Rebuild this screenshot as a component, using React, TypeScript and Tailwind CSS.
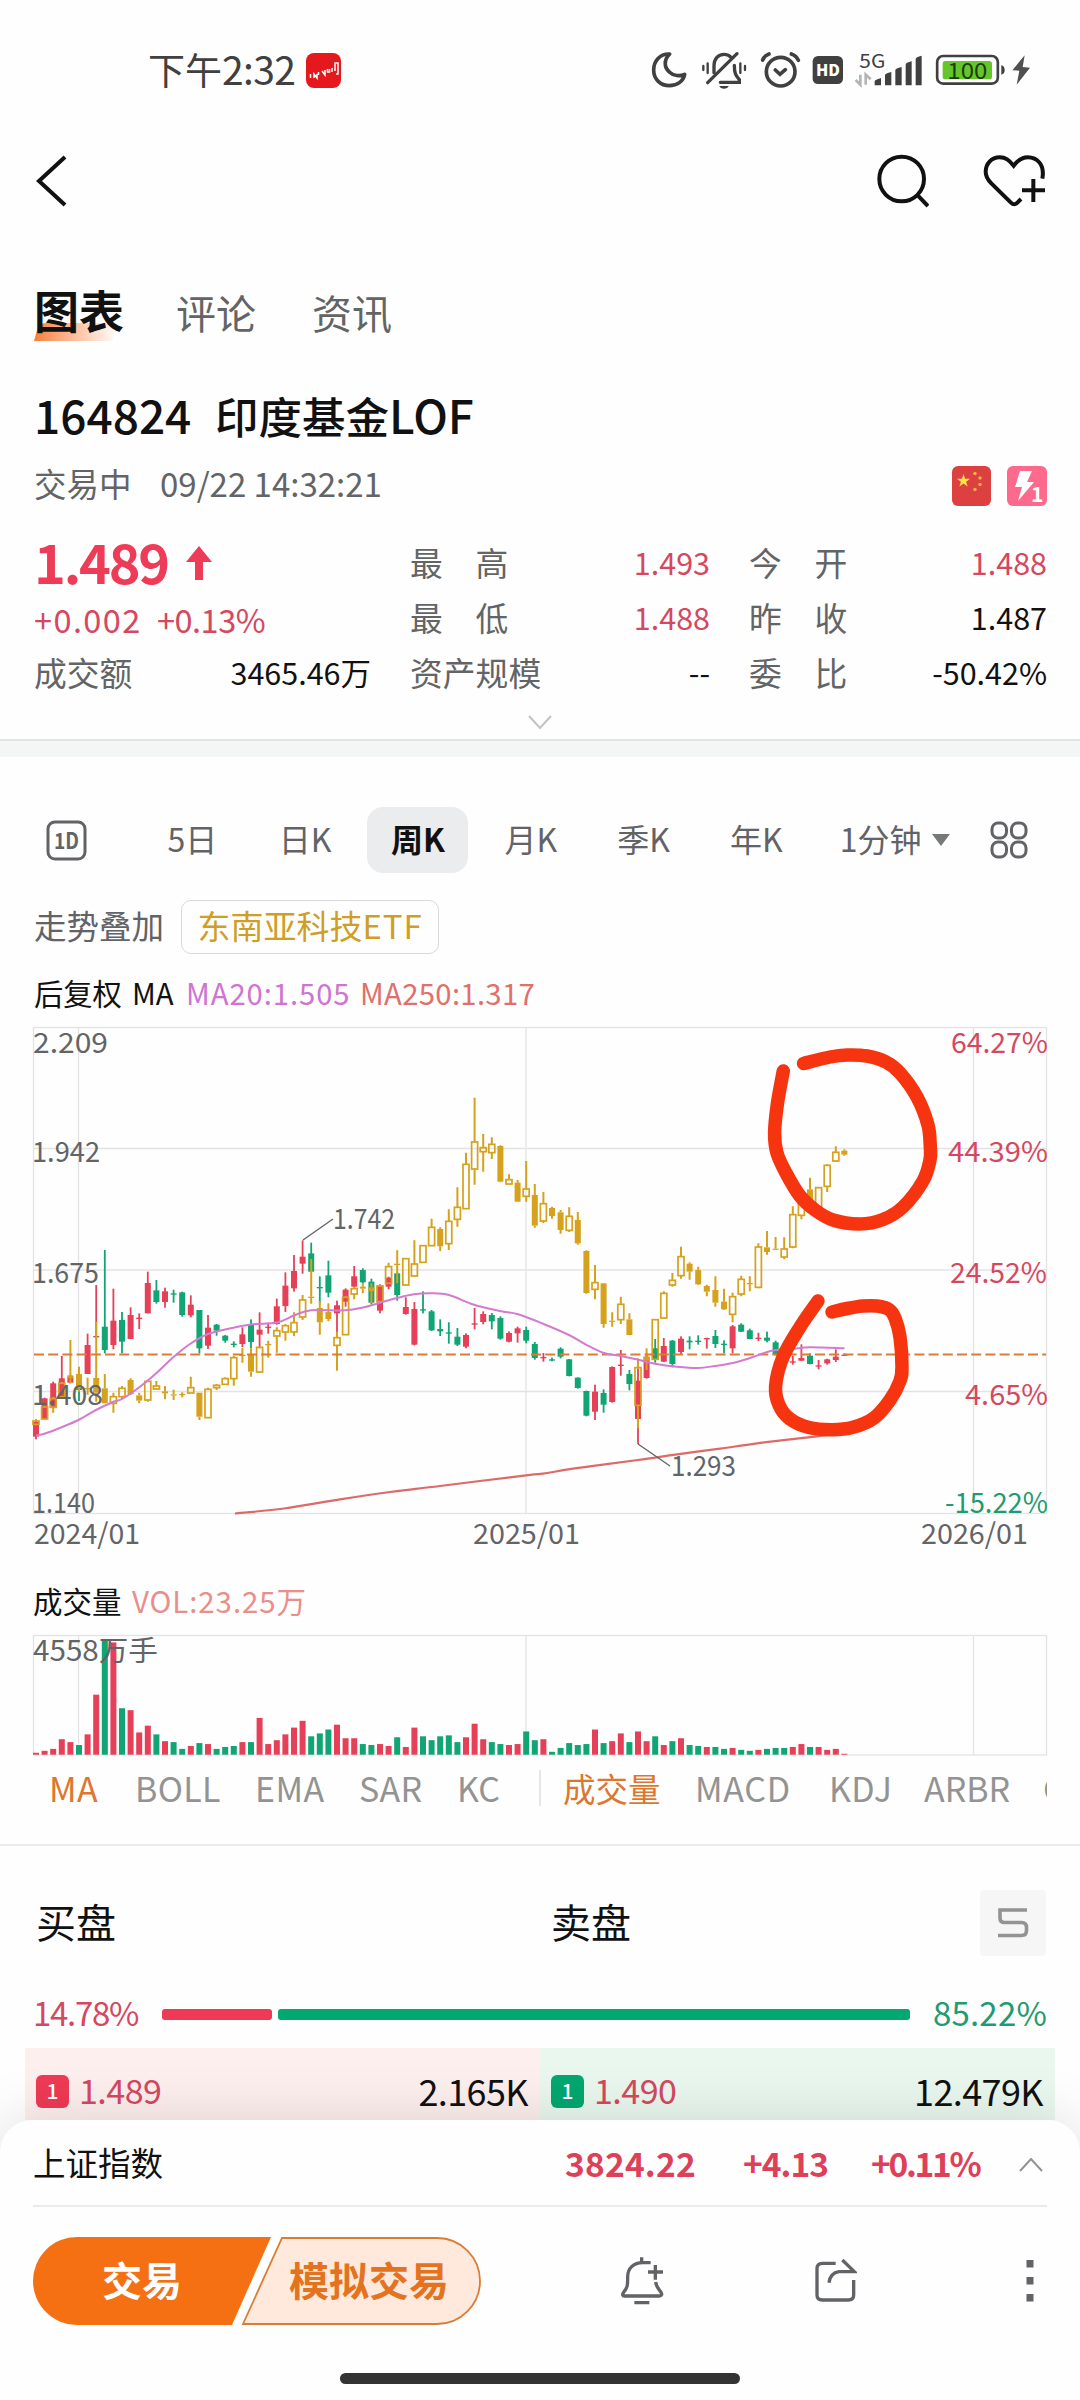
import type { ReactNode } from "react";
import { clsx } from "clsx";

const RED = "#e64059";
const GREEN = "#10a572";
const GOLD = "#d6a11c";

const STEP = 8.6;
const FIRST_X = 36;

type Candle = [high: number, top: number, bottom: number, low: number, kind: string];

// Weekly candles, in thirds of a pixel from the top of the chart
const CANDLES: Candle[] = [
  [1198, 1205, 1250, 1258, "R"], [1133, 1135, 1197, 1198, "R"], [1085, 1090, 1160, 1165, "R"],
  [1008, 1075, 1130, 1130, "R"], [1064, 1070, 1088, 1090, "R"], [1060, 1075, 1110, 1143, "G"],
  [941, 975, 1062, 1062, "R"], [795, 948, 952, 955, "R"], [690, 920, 990, 1000, "G"],
  [806, 902, 975, 988, "R"], [876, 900, 965, 1000, "G"], [862, 885, 957, 957, "R"],
  [880, 893, 897, 927, "R"], [755, 789, 880, 880, "R"], [780, 811, 846, 851, "G"],
  [803, 814, 846, 863, "R"], [809, 820, 823, 848, "G"], [815, 817, 885, 890, "G"],
  [826, 854, 886, 892, "R"], [870, 870, 985, 1000, "G"], [885, 923, 977, 987, "R"],
  [912, 914, 932, 947, "G"], [945, 947, 962, 968, "G"], [964, 971, 974, 982, "G"],
  [922, 943, 972, 981, "R"], [898, 914, 966, 984, "G"], [877, 929, 944, 985, "R"],
  [908, 920, 923, 941, "R"], [836, 859, 912, 914, "R"], [757, 797, 858, 876, "R"],
  [705, 753, 805, 815, "R"], [661, 710, 731, 761, "R"], [668, 700, 755, 755, "G"],
  [769, 801, 804, 850, "G"], [722, 766, 818, 832, "G"], [842, 856, 880, 940, "R"],
  [805, 809, 845, 860, "R"], [738, 769, 800, 802, "R"], [745, 750, 787, 790, "G"],
  [776, 785, 848, 853, "G"], [793, 797, 872, 880, "R"], [770, 773, 800, 808, "R"],
  [755, 760, 825, 842, "G"], [832, 861, 882, 884, "R"], [846, 867, 974, 976, "R"],
  [814, 868, 871, 880, "G"], [870, 874, 931, 933, "G"], [898, 927, 934, 948, "G"],
  [907, 937, 940, 971, "G"], [924, 950, 974, 978, "G"], [940, 945, 980, 985, "R"],
  [864, 910, 914, 928, "R"], [874, 882, 906, 913, "R"], [879, 885, 904, 928, "G"],
  [889, 894, 956, 959, "G"], [934, 939, 965, 967, "R"], [920, 925, 940, 968, "R"],
  [920, 930, 962, 970, "G"], [966, 972, 1014, 1019, "G"], [999, 1011, 1014, 1025, "R"],
  [1013, 1018, 1021, 1024, "G"], [982, 986, 1010, 1015, "G"], [1017, 1018, 1068, 1069, "G"],
  [1072, 1073, 1104, 1106, "G"], [1112, 1113, 1187, 1189, "G"], [1094, 1115, 1175, 1200, "R"],
  [1108, 1119, 1154, 1178, "G"], [1039, 1041, 1146, 1148, "R"], [990, 1034, 1038, 1067, "R"],
  [1050, 1062, 1092, 1111, "G"], [1045, 1082, 1197, 1272, "R"], [1000, 1010, 1074, 1076, "R"],
  [957, 985, 1020, 1028, "G"], [954, 978, 1025, 1026, "R"], [960, 962, 1032, 1042, "G"],
  [949, 956, 996, 1002, "R"], [949, 962, 967, 988, "G"], [946, 962, 965, 974, "G"],
  [953, 954, 958, 986, "R"], [930, 948, 972, 984, "G"], [961, 971, 974, 1000, "G"],
  [915, 919, 985, 1000, "R"], [910, 914, 935, 936, "G"], [926, 931, 957, 958, "G"],
  [938, 953, 956, 963, "R"], [935, 953, 962, 967, "G"], [962, 967, 1005, 1006, "G"],
  [990, 1000, 1012, 1014, "G"], [1008, 1024, 1027, 1034, "R"], [973, 1014, 1022, 1023, "R"],
  [1000, 1007, 1032, 1033, "G"], [1020, 1036, 1039, 1048, "R"], [1016, 1018, 1030, 1034, "R"],
  [988, 1010, 1020, 1026, "R"], [1000, 1004, 1007, 1008, "R"],
];

// Overlay symbol: F = filled body, H = hollow body
const OVERLAY: Candle[] = [
  [1200, 1203, 1213, 1216, "H"], [1157, 1161, 1197, 1198, "H"], [1130, 1136, 1162, 1178, "H"],
  [1085, 1090, 1130, 1132, "H"], [960, 1066, 1075, 1090, "F"], [1040, 1062, 1105, 1115, "F"],
  [1073, 1104, 1107, 1124, "F"], [905, 1074, 1118, 1145, "F"], [1062, 1105, 1150, 1150, "F"],
  [1118, 1130, 1150, 1178, "H"], [1098, 1105, 1130, 1138, "H"], [1075, 1080, 1122, 1125, "F"],
  [1118, 1126, 1142, 1150, "F"], [1082, 1084, 1140, 1145, "H"], [1083, 1098, 1107, 1108, "H"],
  [1098, 1114, 1120, 1138, "F"], [1109, 1123, 1126, 1140, "F"], [1117, 1122, 1125, 1132, "F"],
  [1070, 1103, 1119, 1120, "H"], [1118, 1118, 1190, 1200, "F"], [1103, 1108, 1193, 1194, "H"],
  [1092, 1096, 1103, 1110, "H"], [1072, 1076, 1093, 1095, "H"], [1008, 1013, 1076, 1097, "H"],
  [984, 1004, 1008, 1028, "F"], [985, 1004, 1055, 1070, "F"], [980, 982, 1056, 1057, "H"],
  [962, 972, 976, 1013, "F"], [922, 932, 948, 998, "H"], [912, 917, 936, 962, "H"],
  [877, 908, 936, 948, "H"], [825, 840, 891, 900, "H"], [717, 830, 834, 851, "F"],
  [842, 864, 907, 944, "F"], [850, 876, 897, 904, "F"], [935, 953, 976, 1052, "H"],
  [828, 832, 944, 945, "H"], [800, 806, 822, 838, "H"], [789, 800, 806, 820, "F"],
  [790, 802, 814, 850, "F"], [796, 798, 845, 846, "H"], [728, 740, 790, 792, "H"],
  [691, 731, 735, 790, "F"], [715, 716, 795, 796, "H"], [661, 732, 768, 769, "H"],
  [676, 677, 727, 728, "H"], [596, 622, 677, 678, "H"], [622, 627, 679, 693, "F"],
  [568, 604, 671, 690, "H"], [502, 562, 598, 620, "H"], [398, 433, 566, 567, "H"],
  [233, 366, 447, 494, "H"], [342, 383, 395, 455, "H"], [352, 373, 398, 417, "H"],
  [376, 378, 485, 487, "F"], [463, 479, 492, 493, "H"], [480, 488, 545, 546, "F"],
  [423, 507, 529, 545, "H"], [492, 525, 617, 623, "F"], [516, 551, 603, 609, "H"],
  [560, 564, 588, 596, "F"], [570, 577, 630, 641, "F"], [562, 589, 631, 636, "H"],
  [576, 600, 670, 674, "F"], [691, 693, 819, 821, "F"], [735, 788, 808, 838, "H"],
  [789, 790, 912, 923, "F"], [877, 902, 905, 920, "F"], [830, 853, 899, 912, "H"],
  [880, 898, 945, 946, "F"], [1015, 1043, 1156, 1225, "H"], [985, 1010, 1022, 1050, "F"],
  [897, 899, 1018, 1020, "H"], [814, 820, 894, 895, "H"], [759, 781, 795, 800, "H"],
  [680, 710, 767, 776, "H"], [727, 731, 755, 779, "F"], [740, 750, 793, 795, "F"],
  [794, 798, 815, 829, "F"], [769, 810, 848, 860, "F"], [806, 845, 868, 870, "F"],
  [818, 830, 883, 907, "H"], [767, 778, 822, 829, "H"], [769, 789, 793, 814, "F"],
  [670, 681, 802, 805, "H"], [633, 682, 696, 704, "F"], [651, 686, 689, 690, "F"],
  [652, 687, 711, 718, "H"], [559, 584, 681, 685, "H"], [535, 542, 586, 598, "H"],
  [473, 508, 540, 545, "F"], [501, 503, 560, 562, "H"], [433, 436, 499, 516, "H"],
  [379, 397, 423, 425, "H"], [388, 392, 404, 407, "F"],
];

const VOLUMES =
  "2R 4R 6R 16R 13R 10G 21R 62R 119G 116R 48G 46R 23R 30R 21G 14R 13G 6G 9R 12G 11R 6G 8G 9G 13R 13G 38R 11R 15R 21R 28R 35R 19G 22G 26G 31R 17R 17R 11G 10G 11R 9R 18G 8R 28R 19G 15G 19G 20G 13G 18R 32R 16R 13G 11G 10R 11R 24G 15G 16R 3G 7G 12G 10G 11G 26R 12G 14R 22R 13G 24R 14R 19G 10R 14G 17R 10G 9G 8R 8G 6G 7R 5G 4G 5R 6G 7G 7G 8R 11R 8G 8R 5R 6R 1R".split(" ");

type Point = [number, number];

const MA20: Point[] = [
  [36, 415.5], [45, 413.5], [61, 407.5], [78.5, 400], [96, 390], [113, 382], [122, 379], [139, 367.5], [156, 353.5],
  [173, 337.5], [190, 324], [208, 314], [225, 309.5], [251, 304.5], [277, 302.5], [294, 295.5], [311, 290.3],
  [345, 290.3], [363, 287.5], [380, 282.7], [397, 278], [414, 274.3], [431, 273.3], [449, 275], [474, 284.7],
  [500, 291], [518, 294.3], [543, 303.7], [569, 315], [586, 324.7], [603, 332.7], [621, 336], [638, 339.7],
  [655, 343.7], [677, 346.7], [698, 348], [715, 346], [733, 343], [750, 338], [767, 332], [776, 330],
  [793, 328.7], [810, 327.3], [844.5, 328.3],
];

const MA250: Point[] = [
  [235, 493.5], [284, 488.5], [340, 479.3], [390, 472], [440, 466], [526, 455.3], [543, 453.7], [573, 448.7],
  [638, 440], [677, 434.3], [720, 428.7], [757, 423.3], [817, 416.3], [844.5, 413],
];

const MARK_TOP: Point[] = [
  [783.3, 51], [777.5, 83], [774.6, 113], [777, 133], [786, 153], [800, 176], [815, 190], [833, 200], [860, 204],
  [883, 199.5], [903, 187], [923, 161], [930, 140], [930.3, 127], [928, 105], [917, 77], [900, 53], [886, 42],
  [867, 36], [847, 35], [830, 37], [803.5, 43.5],
];

const MARK_BOTTOM: Point[] = [
  [818, 281], [800, 307], [783, 337], [775.6, 366], [779, 385], [790, 399], [809, 407.5], [832, 409.7],
  [853, 407.3], [874, 398], [890, 380], [900, 361], [902, 347], [900, 317], [895, 298], [889, 289.5],
  [877, 286], [863, 286], [847, 288.5], [832, 292],
];

// Catmull-Rom through the points, written as cubic beziers
function smooth(points: Point[]) {
  let d = `M${points[0][0]} ${points[0][1]}`;
  for (let i = 0; i < points.length - 1; i++) {
    const p0 = points[i - 1] ?? points[i];
    const p1 = points[i];
    const p2 = points[i + 1];
    const p3 = points[i + 2] ?? p2;
    d += ` C${p1[0] + (p2[0] - p0[0]) / 6} ${p1[1] + (p2[1] - p0[1]) / 6}, ${p2[0] - (p3[0] - p1[0]) / 6} ${p2[1] - (p3[1] - p1[1]) / 6}, ${p2[0]} ${p2[1]}`;
  }
  return d;
}

export default function App() {
  return (
    <div
      className={
        'flex h-[2400px] w-[1080px] flex-col overflow-hidden bg-[#fefefe] font-["Noto_Sans_CJK_SC",sans-serif] leading-none text-[#111]'
      }
    >
      <StatusBar />
      <NavBar />
      <Tabs />
      <Quote />
      <div className="h-[18px] shrink-0 border-t-2 border-[#e0e4e4] bg-[#f4f6f6]" />
      <Periods />
      <div className="mt-[27px] flex h-[54px] items-center gap-[17px] pl-[34px] text-[32.5px]">
        <span className="pb-[3px] text-[#626366]">走势叠加</span>
        <span className="flex h-[54px] w-[258px] items-center justify-center whitespace-nowrap rounded-[10px] border border-[#d9d9db] pb-[3px] text-[33px] text-[#cf9e25]">
          东南亚科技<span className="tracking-[0.8px]">ETF</span>
        </span>
      </div>
      <div className="mt-5 flex h-9 items-center whitespace-nowrap pl-[34px] pt-px text-[29.3px]">
        <span className="w-[98px]">后复权</span>
        <span className="w-[54px]">MA</span>
        <span className="w-[174px] tracking-[0.9px] text-[#cf74d0]">MA20:1.505</span>
        <span className="tracking-[0.3px] text-[#e0706c]">MA250:1.317</span>
      </div>
      <PriceChart />
      <div className="mt-[22px] flex h-[38px] items-center pl-[33px] text-[29.5px]">
        <span className="w-[99px]">成交量</span>
        <span className="tracking-[0.9px] text-[#e88f8b]">VOL:23.25万</span>
      </div>
      <VolumeChart />
      <Indicators />
      <OrderBook />
      <BottomSheet />
    </div>
  );
}

function StatusBar() {
  return (
    <div className="flex h-[140px] shrink-0 items-center text-[#404040]">
      <span className="ml-[148px] w-[158px] whitespace-nowrap pb-1 text-[37px]">
        下午<span className="text-[39px] tracking-[-0.6px]">2:32</span>
      </span>
      <svg width="35" height="35" viewBox="0 0 35 35">
        <rect width="35" height="35" rx="8" fill="#e5191d" />
        <path
          d="M4.500 21v4M8 25v-4l3 4v-4M12.500 19v3M16 18l3 4v-5M21.500 16v3h2v-3M26 15v4M29 18v-8h3v11h-2"
          fill="none"
          stroke="#fff"
          strokeWidth="1.500"
        />
      </svg>
      <svg className="ml-[309px]" width="40" height="40" viewBox="30 30 120 120">
        <path
          d="M89 42C58 41 41 65 41 90c0 28 21 47 47 47 23 0 42-13 46-34-14 7-34 5-46-7-15-13-18-36 1-54z"
          fill="none"
          stroke="#404040"
          strokeWidth="11"
          strokeLinejoin="round"
        />
      </svg>
      <svg className="ml-[10px]" width="48" height="40" viewBox="180 30 144 120" fill="none" stroke="#404040" strokeLinecap="round">
        <path d="M222 98V78c0-22 13-35 30-35 8 0 15 3 20 8M283 76c0 24 4 30 15 43v8h-57" strokeWidth="10" />
        <path d="M203 128l88-87" strokeWidth="10" />
        <path d="M190 78v12M203 70v29M301 70v29M315 78v12" strokeWidth="7" />
        <path d="M238 138h28c-4 11-24 11-28 0z" fill="#404040" stroke="none" />
      </svg>
      <svg className="ml-3" width="41" height="40" viewBox="360 30 123 120" fill="none" stroke="#404040" strokeWidth="11" strokeLinecap="round">
        <circle cx="422" cy="95" r="43" />
        <path d="M406 90l14 13 16-14M368 60c3-8 10-15 19-18M454 42c9 3 17 10 21 19" />
      </svg>
      <svg className="ml-[11px]" width="32" height="40" viewBox="516 30 96 120">
        <rect x="518" y="48" width="91" height="84" rx="16" fill="#404040" />
        <text x="564" y="108" textAnchor="middle" fontSize="48" fontWeight="900" fill="#fff" textLength="72" lengthAdjust="spacingAndGlyphs">
          HD
        </text>
      </svg>
      <svg className="ml-[10px] overflow-visible" width="70" height="40" viewBox="642 30 210 120">
        <text x="658" y="83" fontSize="58" fill="#404040" textLength="78" lengthAdjust="spacingAndGlyphs">
          5G
        </text>
        <path d="M661 104v30l-14-14M677 134v-30l15 14" fill="none" stroke="#b5b5b5" strokeWidth="8" />
        <path
          d="M704 136v-12q0-4 19-10v22zM735 136v-31q0-5 19-9v40zM766 136V91q0-6 19-10v55zM797 136V74q0-6 18-10v72zM827 136V58q0-7 18-11v89z"
          fill="#404040"
        />
      </svg>
      <svg className="ml-[11px]" width="71" height="40" viewBox="885 30 213 120">
        <rect x="891.5" y="48" width="182" height="83" rx="18" fill="none" stroke="#404040" strokeWidth="8" />
        <rect x="908" y="63" width="148" height="55" rx="8" fill="#65c62b" />
        <text x="982" y="116" textAnchor="middle" fontSize="67" fill="#1d3b0c" textLength="120" lengthAdjust="spacingAndGlyphs">
          100
        </text>
        <path d="M1084 76q10 2 10 14t-10 14z" fill="#404040" />
      </svg>
      <svg className="ml-[5px]" width="20" height="40" viewBox="1113 30 60 120">
        <path d="M1154 46l-37 45 21 1-8 42 40-51-22-2z" fill="#505050" />
      </svg>
    </div>
  );
}

function NavBar() {
  return (
    <div className="flex h-[82px] shrink-0 items-center">
      <svg className="ml-[34px]" width="34" height="52" viewBox="0 0 34 52" fill="none" stroke="#111" strokeWidth="4">
        <path d="M31 2L5 26l26 24" />
      </svg>
      <svg className="ml-[809px]" width="52" height="54" viewBox="711 342 156 162" fill="none" stroke="#111" strokeWidth="12">
        <circle cx="785" cy="417" r="67" />
        <path d="M831 464l33 34" />
      </svg>
      <svg className="ml-[53px]" width="64" height="54" viewBox="1027 342 192 162" fill="none" stroke="#111" strokeWidth="12">
        <path d="M1208 416c8-43-16-64-44-64-18 0-29 8-42 25-14-17-24-25-42-25-25 0-42 20-42 43 0 16 6 24 17 35l58 57c7 7 12 8 18 3l13-13" />
        <path d="M1181 417v69M1147 451h69" />
      </svg>
    </div>
  );
}

function Tabs() {
  return (
    <div className="mt-[50px] flex h-20 shrink-0 items-center pl-[34px] text-[40px] text-[#636466]">
      <div className="relative w-[142px] pb-[5px] text-[45px] font-bold text-[#111]">
        <div className="absolute -bottom-[4px] left-0 h-[18px] w-[84px] rounded-tl-[12px] bg-linear-to-r from-[#f57f35] to-[#fefefe] [clip-path:polygon(5px_0,100%_0,78px_100%,0_100%)]" />
        <span className="relative">图表</span>
      </div>
      <span className="w-[136px]">评论</span>
      <span>资讯</span>
    </div>
  );
}

function Quote() {
  return (
    <div className="shrink-0">
      <div className="mt-8 flex h-[60px] items-center pl-[34px] text-[43.5px] font-medium">
        <span className="w-[181px] text-[46px]">164824</span>
        <span>
          印度基金<span className="text-[46px]">LOF</span>
        </span>
      </div>
      <div className="mt-[20px] flex h-[43px] items-center pl-[34px] text-[32.5px] text-[#636466]">
        <span className="w-[126px] pb-1">交易中</span>
        <span className="flex-1 pb-1 text-[33px]">09/22 14:32:21</span>
        <svg width="39" height="40" viewBox="0 0 39 40">
          <rect width="39" height="40" rx="6" fill="#dc4041" />
          <path d="M11.500 8l1.600 4.800h5l-4 3 1.500 4.800-4.100-3-4.100 3 1.500-4.800-4-3h5z" fill="#fbe34c" />
          <g fill="#f5b53c">
            <circle cx="23" cy="7.500" r="1.700" />
            <circle cx="28" cy="12" r="1.700" />
            <circle cx="28" cy="18.500" r="1.700" />
            <circle cx="23" cy="23.500" r="1.700" />
          </g>
        </svg>
        <svg className="ml-4 mr-[33px]" width="40" height="40" viewBox="0 0 40 40">
          <rect width="40" height="40" rx="6" fill="#fd6a8b" />
          <path d="M13 5h12l-5 11h7L11 35l4-14H8z" fill="#fff" />
          <text x="24" y="35.500" fontSize="21" fontWeight="700" fill="#fff">
            1
          </text>
        </svg>
      </div>
      <div className="mt-[28px] grid grid-cols-[376px_339px_298px] grid-rows-[55px_55px_55px] pl-[34px] text-[30.5px] tabular-nums">
        <div className="flex items-center gap-[17px] pb-[3px] text-[54px] font-bold tracking-[-2.2px] text-[#ee3c58]">
          1.489
          <svg className="mt-1" width="28" height="34" viewBox="0 0 28 34">
            <path d="M14 0l13 16H18v18H10V16H1z" fill="#ee3c58" />
          </svg>
        </div>
        <Cell label="最　高" value="1.493" up />
        <Cell label="今　开" value="1.488" up />
        <div className="flex items-center whitespace-nowrap pt-1 text-[32.5px] text-[#d5485f]">
          <span className="w-[123px] tracking-[1.4px]">+0.002</span>
          <span className="tracking-[-0.5px]">+0.13%</span>
        </div>
        <Cell label="最　低" value="1.488" up />
        <Cell label="昨　收" value="1.487" />
        <Cell label="成交额" value="3465.46万" />
        <Cell label="资产规模" value="--" />
        <Cell label="委　比" value="-50.42%" />
      </div>
      <div className="flex h-[39px] items-center justify-center pt-[5px]">
        <svg width="24" height="15" viewBox="0 0 24 15" fill="none" stroke="#c2c3c5" strokeWidth="2">
          <path d="M1 1l11 12L23 1" />
        </svg>
      </div>
    </div>
  );
}

function Cell({ label, value, up }: { label: string; value: string; up?: boolean }) {
  return (
    <div className="flex items-center justify-between whitespace-nowrap pr-[39px] nth-[3n]:pr-0">
      <span className="text-[32.8px] text-[#636466]">{label}</span>
      <span className={up ? "text-[#d5485f]" : "text-[#111]"}>{value}</span>
    </div>
  );
}

const PERIODS = ["5日", "日K", "周K", "月K", "季K", "年K"];

function Periods() {
  return (
    <div className="mt-[50px] flex h-[66px] shrink-0 items-center text-[32px] text-[#626366]">
      <svg className="ml-[46px] mr-[49px]" width="41" height="41" viewBox="0 0 41 41">
        <rect x="2" y="2" width="37" height="37" rx="7" fill="none" stroke="#626366" strokeWidth="3" />
        <text x="20.500" y="28.500" textAnchor="middle" fontSize="22" fontWeight="700" fill="#626366" textLength="25" lengthAdjust="spacingAndGlyphs">
          1D
        </text>
      </svg>
      {PERIODS.map((p) => (
        <div key={p} className="flex w-[112.8px] justify-center">
          <span
            className={clsx(
              "flex h-[66px] w-[101px] items-center justify-center rounded-2xl pb-1",
              p === "周K" && "bg-[#ebecee] font-bold text-[#111]"
            )}
          >
            {p}
          </span>
        </div>
      ))}
      <span className="ml-[27px] w-[92px] whitespace-nowrap pb-1">1分钟</span>
      <svg width="18" height="12" viewBox="0 0 18 12">
        <path d="M0 0h18L9 12z" fill="#77787a" />
      </svg>
      <svg className="ml-[40px]" width="38" height="38" viewBox="0 0 38 38" fill="none" stroke="#626366" strokeWidth="3">
        <rect x="2" y="2" width="14.500" height="15" rx="6" />
        <rect x="21.500" y="2" width="14.500" height="15" rx="6" />
        <rect x="2" y="21" width="14.500" height="15" rx="6" />
        <rect x="21.500" y="21" width="14.500" height="15" rx="6" />
      </svg>
    </div>
  );
}

function Label({ x, y, w, end, fill = "#636466", children }: {
  x: number;
  y: number;
  w: number;
  end?: boolean;
  fill?: string;
  children: ReactNode;
}) {
  return (
    <text
      x={end ? x - w : x}
      y={y}
      fontSize="28.5"
      fill={fill}
      textLength={w}
      lengthAdjust="spacingAndGlyphs"
    >
      {children}
    </text>
  );
}

function PriceChart() {
  return (
    <svg className="mt-[10px] shrink-0" width="1080" height="540" viewBox="0 0 1080 540">
      <g fill="none" stroke="#e3e3e3" strokeWidth="1.3">
        <rect x="33.500" y="7.500" width="1013" height="486" />
        <path d="M34 128.500h1012M34 250h1012M34 371.500h1012M78.500 8v485M526 8v485M973.500 8v485" />
      </g>
      {CANDLES.map(([high, top, bottom, low, kind], i) => {
        const x = FIRST_X + i * STEP;
        const color = kind === "R" ? RED : GREEN;
        return (
          <g key={i} fill={color}>
            <rect x={x - 0.9} y={high / 3} width="1.8" height={(low - high) / 3} />
            <rect x={x - 3} y={top / 3} width="6" height={Math.max(1.3, (bottom - top) / 3)} />
          </g>
        );
      })}
      {OVERLAY.map(([high, top, bottom, low, kind], i) => {
        const x = FIRST_X + i * STEP;
        return (
          <g key={i}>
            <path
              d={`M${x} ${high / 3}V${top / 3}M${x} ${bottom / 3}V${low / 3}`}
              stroke={GOLD}
              strokeWidth="2"
            />
            <rect
              x={x - 3}
              y={top / 3}
              width="6"
              height={Math.max(1.2, (bottom - top) / 3)}
              fill={kind === "F" ? GOLD : "none"}
              stroke={kind === "F" ? "none" : GOLD}
              strokeWidth="1.700"
            />
          </g>
        );
      })}
      <path d="M34 334.500h1012" stroke="#df7a35" strokeWidth="2" strokeDasharray="10 4.200" />
      <path d={smooth(MA20)} fill="none" stroke="#d47bd0" strokeWidth="2" />
      <path d={smooth(MA250)} fill="none" stroke="#dd6a68" strokeWidth="2.200" />
      <path d="M303 220l30-21M638 424l32 22" stroke="#636466" strokeWidth="1.400" />
      <Label x={333} y={208.500} w={62}>1.742</Label>
      <Label x={671} y={455.500} w={65}>1.293</Label>

      <Label x={33} y={32.700} w={75}>2.209</Label>
      <Label x={32} y={141.700} w={68}>1.942</Label>
      <Label x={32} y={263} w={67}>1.675</Label>
      <Label x={32} y={385} w={71}>1.408</Label>
      <Label x={32} y={493} w={63}>1.140</Label>
      <Label x={1048} y={32.700} w={97} end fill="#d5485f">64.27%</Label>
      <Label x={1048} y={141.700} w={100} end fill="#d5485f">44.39%</Label>
      <Label x={1047} y={263} w={97} end fill="#d5485f">24.52%</Label>
      <Label x={1048} y={385} w={83} end fill="#d5485f">4.65%</Label>
      <Label x={1048} y={493} w={103} end fill="#1e9b70">-15.22%</Label>
      <Label x={34} y={524} w={106}>2024/01</Label>
      <Label x={473} y={524} w={107}>2025/01</Label>
      <Label x={921} y={524} w={107}>2026/01</Label>

      <g fill="none" stroke="#f6340f" strokeWidth="13.5" strokeLinecap="round" strokeLinejoin="round">
        <path d={smooth(MARK_TOP)} />
        <path d={smooth(MARK_BOTTOM)} />
      </g>
    </svg>
  );
}

function VolumeChart() {
  return (
    <svg className="mt-[10px] shrink-0" width="1080" height="132" viewBox="0 0 1080 132">
      <g fill="none" stroke="#e3e3e3" strokeWidth="1.3">
        <rect x="33.500" y="5.500" width="1013" height="119.500" />
        <path d="M78.500 6v119M526 6v119M973.500 6v119" />
      </g>
      {VOLUMES.map((v, i) => {
        const h = parseInt(v, 10) * 0.968;
        return (
          <rect
            key={i}
            x={FIRST_X + i * STEP - 3}
            y={124.7 - h}
            width="6"
            height={h}
            fill={v.endsWith("R") ? RED : GREEN}
          />
        );
      })}
      <Label x={33} y={31} w={125}>4558万手</Label>
    </svg>
  );
}

function Indicators() {
  return (
    <div className="mr-[33px] flex h-[52px] shrink-0 items-center overflow-hidden whitespace-nowrap pl-[49px] text-[34px] text-[#939393]">
      <span className="w-[86px] shrink-0 tracking-[0.5px] text-[#dd772d]">MA</span>
      <span className="w-[120px] shrink-0 tracking-[0.3px]">BOLL</span>
      <span className="w-[104px] shrink-0 tracking-[0.4px]">EMA</span>
      <span className="w-[98px] shrink-0 tracking-[0.3px]">SAR</span>
      <span className="w-[82px] shrink-0">KC</span>
      <span className="mr-[22px] h-9 w-[2px] shrink-0 bg-[#e6e6e6]" />
      <span className="w-[132px] shrink-0 text-[32.5px] text-[#dd772d]">成交量</span>
      <span className="w-[134px] shrink-0 tracking-[0.7px]">MACD</span>
      <span className="w-[95px] shrink-0 tracking-[0.4px]">KDJ</span>
      <span className="w-[119px] shrink-0">ARBR</span>
      <span className="shrink-0">C</span>
    </div>
  );
}

function OrderBook() {
  return (
    <div className="mt-[30px] shrink-0 border-t-2 border-[#ececec]">
      <div className="mt-11 flex h-[66px] items-center pl-[36px] text-[40px]">
        <span className="w-[515px] pb-1">买盘</span>
        <span className="w-[429px] pb-1">卖盘</span>
        <span className="flex size-[66px] items-center justify-center rounded bg-[#f6f6f6]">
          <svg width="32" height="32" viewBox="0 0 32 32" fill="none" stroke="#939393" strokeWidth="3.6">
            <path d="M30 3H3v8q0 4.500 4.500 4.500h17q5 0 5 5v3q0 5-5 5H1" />
          </svg>
        </span>
      </div>
      <div className="mt-[38px] flex h-10 items-center pl-[33px] pr-[33px] text-[33px]">
        <span className="w-[129px] pb-1 tracking-[-1.3px] text-[#d5485f]">14.78%</span>
        <span className="h-[11px] w-[110px] rounded-[3px] bg-[#ee3a55]" />
        <span className="ml-[6px] h-[11px] w-[632px] rounded-[3px] bg-[#03a770]" />
        <span className="flex-1 pb-1 text-right tracking-[0.2px] text-[#1e9b70]">85.22%</span>
      </div>
      <div className="mx-[25px] mt-[14px] flex h-[72px] overflow-hidden">
        <Depth color="bg-[#ee3a55]" bg="bg-[#feefef]" price="1.489" amount="2.165K" />
        <Depth color="bg-[#03a770]" bg="bg-[#e9f7ee]" price="1.490" amount="12.479K" />
      </div>
    </div>
  );
}

function Depth({ color, bg, price, amount }: { color: string; bg: string; price: string; amount: string }) {
  return (
    <div className={clsx("flex h-[86px] w-[515px] items-center pl-[11px] pr-[12px]", bg)}>
      <span className={clsx("flex h-[33px] w-[33px] items-center justify-center rounded-md pb-0.5 text-[21px] font-medium text-white", color)}>
        1
      </span>
      <span className="ml-[10px] flex-1 pb-[3px] text-[34px] tracking-[-0.5px] text-[#d5485f]">{price}</span>
      <span className="pb-[3px] text-[36px] tracking-[-0.6px]">{amount}</span>
    </div>
  );
}

function BottomSheet() {
  return (
    <div className="relative h-[280px] shrink-0 rounded-t-[32px] bg-[#fefefe] shadow-[0_0_60px_rgba(0,0,0,0.13)]">
      <div className="mx-[33px] flex h-[87px] items-center whitespace-nowrap border-b-2 border-[#ebebeb] text-[33.500px] font-bold text-[#dd4059]">
        <span className="w-[532px] text-[32.5px] font-normal text-[#111]">上证指数</span>
        <span className="w-[178px] tracking-[0.2px]">3824.22</span>
        <span className="w-[128px] tracking-[-1px]">+4.13</span>
        <span className="w-[148px] tracking-[-2.3px]">+0.11%</span>
        <svg className="mt-1" width="24" height="14" viewBox="0 0 24 14" fill="none" stroke="#939393" strokeWidth="2">
          <path d="M1 13L12 1l11 12" />
        </svg>
      </div>
      <div className="mt-[30px] flex h-[88px] items-center">
        <button className="relative ml-[33px] h-[88px] w-[448px] text-[40px] font-bold">
          <svg className="absolute inset-0" width="448" height="88" viewBox="0 0 448 88">
            <path d="M44 0H238L199 88H44A44 44 0 0 1 44 0z" fill="#f57013" />
            <path d="M249 1H404A43 43 0 0 1 404 87H210z" fill="#fee9dc" stroke="#d97c34" strokeWidth="1.800" />
          </svg>
          <span className="relative flex items-center pb-1 pl-[69px]">
            <span className="w-[187px] text-left text-white">交易</span>
            <span className="text-[#e4731f]">模拟交易</span>
          </span>
        </button>
        <svg className="ml-[139px]" width="44" height="50" viewBox="62 103 132 150" fill="none" stroke="#626366" strokeWidth="10">
          <path d="M127 107v16M154 123h-24c-28 0-45 18-45 42 0 26 0 32-12 47-6 8-2 11 2 11h105c7 0 9-5 5-11-10-15-15-18-16-31" />
          <path d="M105 243h45M168 130v44M146 151h45" />
        </svg>
        <svg className="ml-[150px]" width="43" height="46" viewBox="644 111 129 138" fill="none" stroke="#626366" strokeWidth="10">
          <path d="M709 127h-40q-16 0-16 16v79q0 15 16 15h78q16 0 16-15v-45" />
          <path d="M729 117l36 35h-46q-26 4-30 33" />
        </svg>
        <svg className="ml-[169px]" width="8" height="42" viewBox="0 0 8 42" fill="#626366">
          <path d="M.5 0h7v7.500h-7zM.5 17h7v7.500h-7zM.5 34h7v7.500h-7z" />
        </svg>
      </div>
      <div className="mx-auto mt-12 h-[11px] w-[400px] rounded-full bg-[#333]" />
    </div>
  );
}
